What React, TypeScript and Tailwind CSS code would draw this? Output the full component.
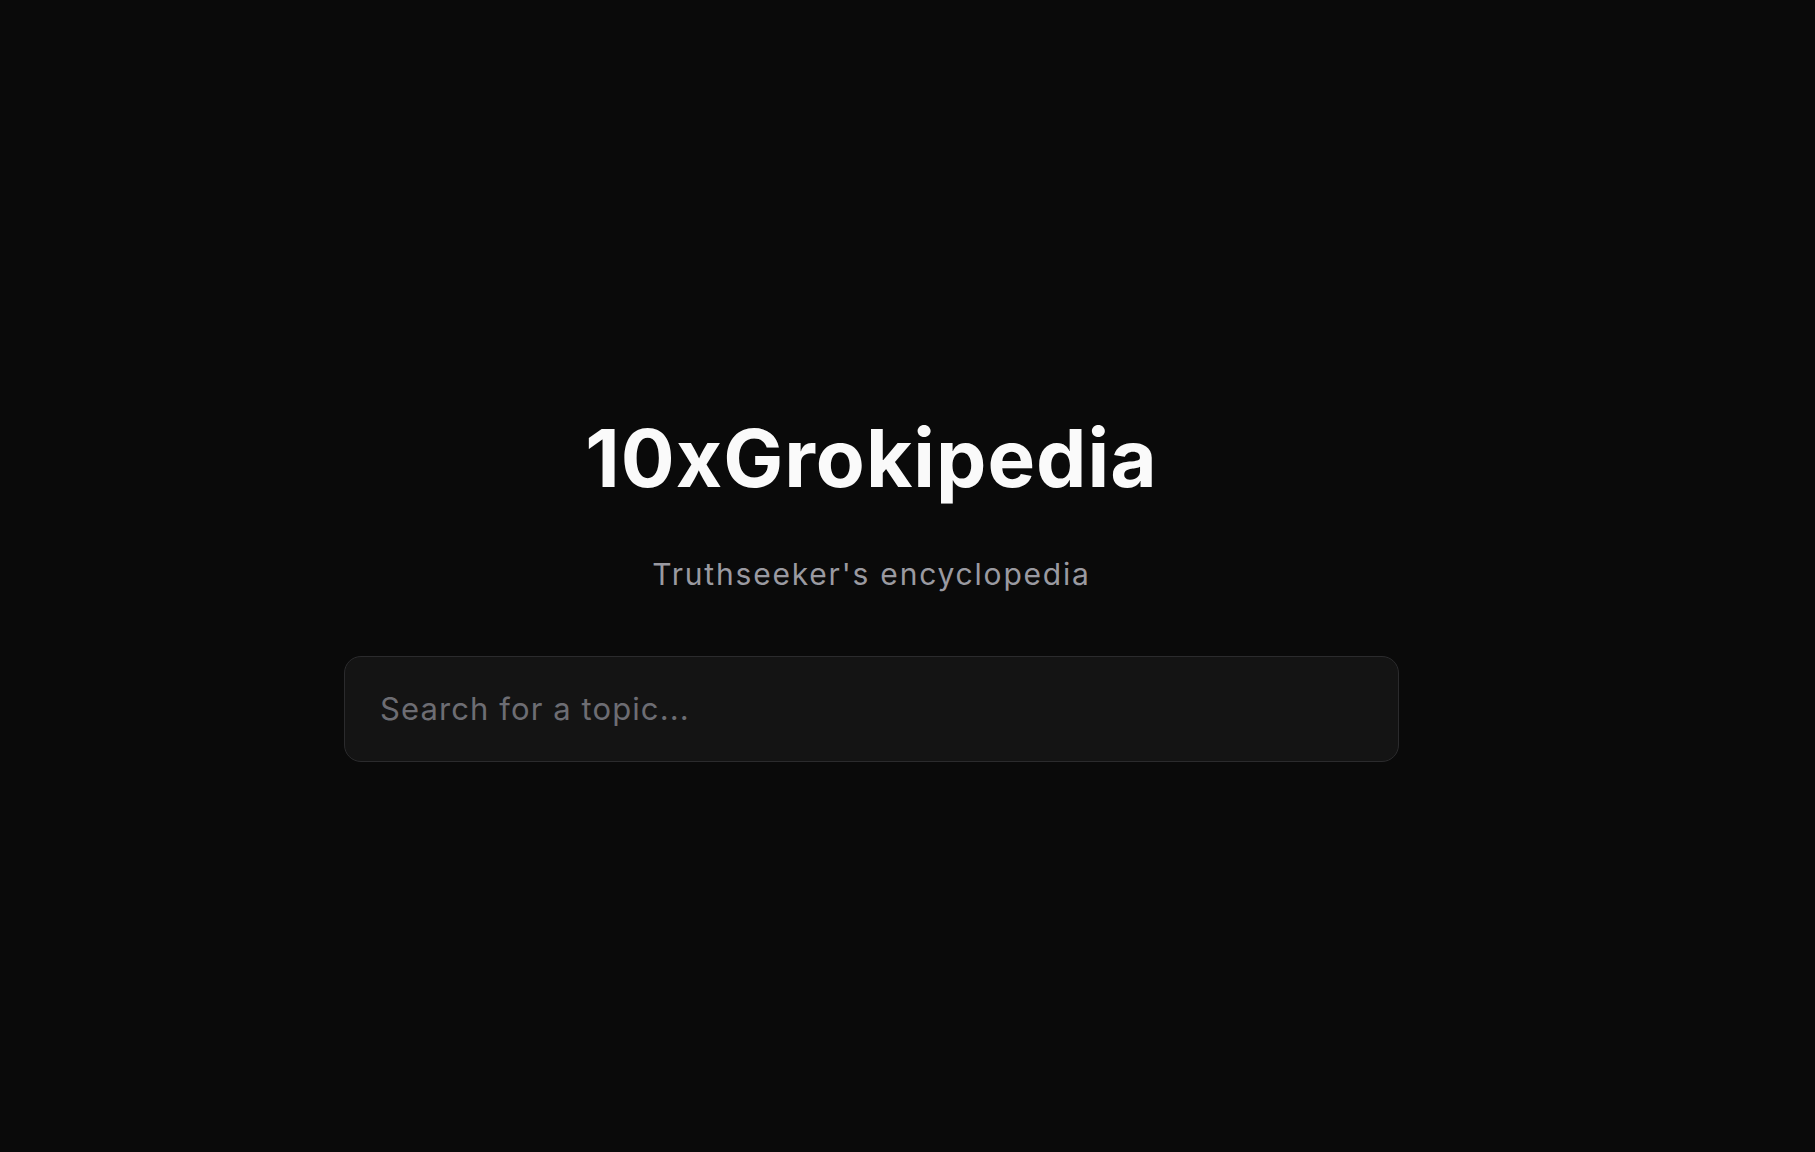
import { useState } from 'react'

export default function App() {
  const [query, setQuery] = useState('')

  return (
    <div
      className="min-h-[1152px] w-full bg-[#0a0a0a] flex justify-center pr-[72px]"
      style={{ fontFamily: 'Inter, "Noto Sans", sans-serif' }}
    >
      <main className="flex flex-col items-center pt-[418px]">
        {/* Title */}
        <h1 className="text-[80px] leading-none font-bold tracking-[1px] text-[#fafafa]">
          10xGrokipedia
        </h1>

        {/* Tagline */}
        <p className="mt-[58px] text-[30px] leading-[36px] tracking-[1.8px] text-[#9a9aa1]">
          Truthseeker&apos;s encyclopedia
        </p>

        {/* Search box */}
        <div className="mt-[64px] w-[1055px] h-[106px] flex items-center rounded-[17px] border border-[#2b2b2d] bg-[#141414] pl-[35px] pr-8">
          <input
            type="text"
            value={query}
            onChange={(e) => setQuery(e.target.value)}
            placeholder="Search for a topic..."
            className="w-full bg-transparent text-[31px] leading-[40px] tracking-[1.1px] text-[#e5e5e5] placeholder:text-[#6d6d73] outline-none"
          />
        </div>
      </main>
    </div>
  )
}
